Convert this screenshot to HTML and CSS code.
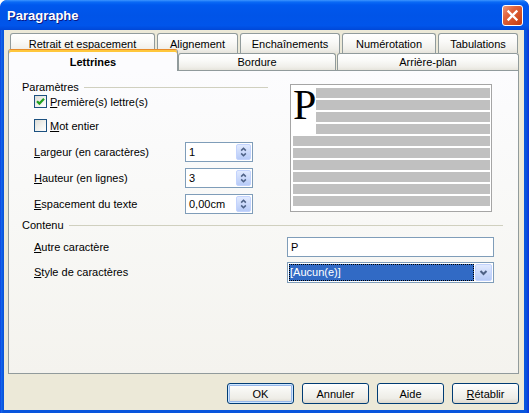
FILE: index.html
```html
<!DOCTYPE html>
<html lang="fr">
<head>
<meta charset="utf-8">
<title>Paragraphe</title>
<link rel="stylesheet" href="styles.css">
</head>
<body>
<div class="window">
  <div class="titlebar">
    <span class="title">Paragraphe</span>
    <span class="close">
      <svg width="19" height="19" viewBox="0 0 19 19"><path d="M5.5 5.5 L13.5 13.5 M13.5 5.5 L5.5 13.5" stroke="#fff" stroke-width="2.3" stroke-linecap="square" fill="none"/></svg>
    </span>
  </div>
  <div class="client">
    <div class="tabrow row1">
      <div class="tab t-retrait">Retrait et espacement</div>
      <div class="tab t-align">Alignement</div>
      <div class="tab t-ench">Enchaînements</div>
      <div class="tab t-num">Numérotation</div>
      <div class="tab t-tab">Tabulations</div>
    </div>
    <div class="tabrow row2">
      <div class="tab selected t-lett">Lettrines</div>
      <div class="tab t-bord">Bordure</div>
      <div class="tab t-arr">Arrière-plan</div>
    </div>
    <div class="panel">
      <div class="top">
        <div class="params">
          <div class="ghead"><span>Paramètres</span><span class="gline"></span></div>
          <div class="check-row first">
            <span class="cbox checked"><svg width="11" height="11" viewBox="0 0 11 11"><path d="M2 5.2 L4.4 7.6 L9 2.8" stroke="#21A121" stroke-width="2.2" fill="none"/></svg></span>
            <span class="ctext"><u>P</u>remière(s) lettre(s)</span>
          </div>
          <div class="check-row">
            <span class="cbox"></span>
            <span class="ctext"><u>M</u>ot entier</span>
          </div>
          <div class="field-row first">
            <span class="flabel"><u>L</u>argeur (en caractères)</span>
            <span class="spin"><span class="sval">1</span><span class="sbtn"><svg width="14" height="14" viewBox="0 0 14 14"><path d="M4.5 5.5 L7 3 L9.5 5.5 M4.5 8.5 L7 11 L9.5 8.5" stroke="#4D6185" stroke-width="1.7" fill="none"/></svg></span></span>
          </div>
          <div class="field-row">
            <span class="flabel"><u>H</u>auteur (en lignes)</span>
            <span class="spin"><span class="sval">3</span><span class="sbtn"><svg width="14" height="14" viewBox="0 0 14 14"><path d="M4.5 5.5 L7 3 L9.5 5.5 M4.5 8.5 L7 11 L9.5 8.5" stroke="#4D6185" stroke-width="1.7" fill="none"/></svg></span></span>
          </div>
          <div class="field-row">
            <span class="flabel"><u>E</u>spacement du texte</span>
            <span class="spin"><span class="sval">0,00cm</span><span class="sbtn"><svg width="14" height="14" viewBox="0 0 14 14"><path d="M4.5 5.5 L7 3 L9.5 5.5 M4.5 8.5 L7 11 L9.5 8.5" stroke="#4D6185" stroke-width="1.7" fill="none"/></svg></span></span>
          </div>
        </div>
        <div class="preview">
          <div class="pv-head">
            <span class="dropcap">P</span>
            <div class="pv-col">
              <span class="bar"></span><span class="bar"></span><span class="bar"></span><span class="bar"></span>
            </div>
          </div>
          <span class="bar"></span><span class="bar"></span><span class="bar"></span>
          <span class="bar"></span><span class="bar"></span><span class="bar"></span>
        </div>
      </div>
      <div class="ghead contenu"><span>Contenu</span><span class="gline"></span></div>
      <div class="c-row first">
        <span class="clabel"><u>A</u>utre caractère</span>
        <span class="textbox">P</span>
      </div>
      <div class="c-row">
        <span class="clabel"><u>S</u>tyle de caractères</span>
        <span class="select"><span class="sel-val">[Aucun(e)]</span><span class="dd"><svg width="15" height="15" viewBox="0 0 15 15"><path d="M4.5 6 L7.5 9 L10.5 6" stroke="#4D6185" stroke-width="2" fill="none"/></svg></span></span>
      </div>
    </div>
    <div class="buttons">
      <span class="btn default">OK</span>
      <span class="btn">Annuler</span>
      <span class="btn">Aide</span>
      <span class="btn"><u>R</u>établir</span>
    </div>
  </div>
</div>
</body>
</html>
```

FILE: styles.css
```css
html, body {
  margin: 0;
  padding: 0;
  background: #ffffff;
}
body {
  width: 529px;
  height: 413px;
  overflow: hidden;
  font-family: "Liberation Sans", Arial, sans-serif;
  font-size: 11px;
  color: #000;
}
u { text-decoration: underline; text-underline-offset: 1px; }

.window {
  width: 529px;
  height: 413px;
  box-sizing: border-box;
  background: linear-gradient(to right, #0831D9 0, #166AEE 1px, #0855DD 3px, #0855DD calc(100% - 3px), #0831D9 100%);
  border-radius: 7px 7px 0 0;
  display: flex;
  flex-direction: column;
  overflow: hidden;
}

.titlebar {
  height: 30px;
  flex: none;
  display: flex;
  align-items: center;
  justify-content: space-between;
  padding: 0 6px 0 7px;
  background: linear-gradient(to bottom, #3D95FF 0, #0A6AF6 2px, #0058EE 5px, #0054E8 50%, #0055EB 85%, #0048D8 100%);
  border-radius: 7px 7px 0 0;
}
.title {
  color: #fff;
  font-weight: bold;
  font-size: 13px;
  text-shadow: 1px 1px 0 #0A1883;
  margin-top: 1px;
}
.close {
  width: 21px;
  height: 21px;
  box-sizing: border-box;
  border: 1px solid #fff;
  border-radius: 3px;
  background: linear-gradient(135deg, #EE9A7C 0, #E0633D 35%, #D24E22 70%, #C23A12 100%);
  display: flex;
  align-items: center;
  justify-content: center;
  margin-top: 1px;
}

.client {
  flex: 1;
  margin: 0 5px 3px 4px;
  background: #ECE9D8;
  padding: 3px 5px 0 4px;
  display: flex;
  flex-direction: column;
}

.tabrow {
  display: flex;
}
.row1 {
  height: 20px;
  margin-left: 2px;
  gap: 2px;
}
.row2 {
  height: 17px;
}
.tab {
  box-sizing: border-box;
  border: 1px solid #919B9C;
  border-bottom: none;
  border-radius: 3px 3px 0 0;
  background: linear-gradient(to bottom, #FFFFFF 0, #FAFAF8 40%, #F0EFEA 80%, #E6E4DC 100%);
  display: flex;
  align-items: center;
  justify-content: center;
  white-space: nowrap;
}
.row1 .tab { padding-top: 1px; }
.t-retrait { width: 145px; }
.t-align { width: 81px; }
.t-ench { width: 100px; }
.t-num { width: 94px; }
.t-tab { width: 80px; }
.t-lett { width: 170px; }
.t-bord { width: 158px; }
.t-arr { width: 182px; margin-left: 1px; }

.tab.selected {
  position: relative;
  z-index: 2;
  margin-top: -4px;
  margin-bottom: -1px;
  border-top: 1px solid #E68B2C;
  box-shadow: inset 0 2px 0 #FFC73C;
  background: #FCFCFE;
  font-weight: bold;
  padding-top: 3px;
}

.panel {
  height: 304px;
  box-sizing: border-box;
  border: 1px solid #919B9C;
  background: linear-gradient(to bottom, #FCFCFE 0, #F8F8F6 50%, #F4F3EE 100%);
  padding: 9px 15px 0 13px;
}

.top {
  display: flex;
  align-items: flex-start;
}
.params {
  width: 246px;
}
.ghead {
  height: 14px;
  display: flex;
  align-items: center;
}
.gline {
  flex: 1;
  height: 0;
  border-top: 1px solid #D0D0BF;
  margin-left: 5px;
  margin-top: 1px;
}

.check-row {
  height: 13px;
  display: flex;
  align-items: center;
  padding-left: 12px;
  margin-top: 11px;
}
.check-row.first { margin-top: 1px; }
.cbox {
  width: 13px;
  height: 13px;
  box-sizing: border-box;
  border: 1px solid #1C5180;
  background: linear-gradient(135deg, #DCDCD7 0, #F0F0EC 50%, #FFFFFF 100%);
  display: flex;
  align-items: center;
  justify-content: center;
  flex: none;
}
.ctext { margin-left: 3px; }

.field-row {
  height: 20px;
  display: flex;
  align-items: center;
  padding-left: 12px;
  margin-top: 6px;
}
.field-row.first { margin-top: 10px; }
.flabel { width: 151px; flex: none; }
.spin {
  width: 68px;
  height: 20px;
  box-sizing: border-box;
  border: 1px solid #7F9DB9;
  background: #fff;
  display: flex;
  align-items: center;
  justify-content: space-between;
  padding: 0 1px 0 3px;
}
.sbtn {
  width: 15px;
  height: 16px;
  box-sizing: border-box;
  border: 1px solid #C3D3FD;
  border-radius: 2px;
  background: linear-gradient(to bottom, #E1EAFE 0, #CCDAFB 50%, #B7CBF7 100%);
  display: flex;
  align-items: center;
  justify-content: center;
}

.preview {
  margin-left: 22px;
  margin-top: 4px;
  width: 202px;
  height: 128px;
  box-sizing: border-box;
  border: 1px solid #A5A5A5;
  background: #fff;
  padding: 3px 1px 0 2px;
  display: flex;
  flex-direction: column;
  gap: 2px;
}
.pv-head {
  display: flex;
}
.dropcap {
  width: 23px;
  flex: none;
  font-family: "Liberation Serif", "Times New Roman", serif;
  font-size: 42px;
  line-height: 35px;
  height: 46px;
}
.pv-col {
  flex: 1;
  display: flex;
  flex-direction: column;
  gap: 2px;
}
.bar {
  display: block;
  height: 10px;
  background: #C0C0C0;
}

.contenu { margin-top: 4px; }

.c-row {
  height: 20px;
  display: flex;
  align-items: center;
  padding-left: 12px;
  margin-top: 5px;
}
.clabel { width: 253px; flex: none; }
.textbox {
  width: 207px;
  height: 20px;
  box-sizing: border-box;
  border: 1px solid #7F9DB9;
  background: #fff;
  padding-left: 3px;
  display: flex;
  align-items: center;
}
.select {
  width: 207px;
  height: 21px;
  box-sizing: border-box;
  border: 1px solid #7F9DB9;
  background: #fff;
  padding: 1px;
  display: flex;
}
.sel-val {
  flex: 1;
  background: #316AC5;
  color: #fff;
  outline: 1px dotted #000;
  outline-offset: -1px;
  padding-left: 1px;
  display: flex;
  align-items: center;
  margin-right: 1px;
}
.dd {
  width: 17px;
  box-sizing: border-box;
  border: 1px solid #C3D3FD;
  border-radius: 2px;
  background: linear-gradient(to bottom, #E1EAFE 0, #CCDAFB 50%, #B7CBF7 100%);
  display: flex;
  align-items: center;
  justify-content: center;
}

.buttons {
  display: flex;
  justify-content: flex-end;
  gap: 8px;
  margin-top: 9px;
}
.btn {
  width: 67px;
  height: 21px;
  box-sizing: border-box;
  border: 1px solid #003C74;
  border-radius: 3px;
  background: linear-gradient(to bottom, #FFFFFF 0, #F7F7F4 30%, #EEEDE7 75%, #DCD8CE 100%);
  display: flex;
  align-items: center;
  justify-content: center;
}
.btn.default {
  box-shadow: inset 0 0 0 1px #CEE7FF, inset 0 0 0 2px #98B8EA;
}
```
